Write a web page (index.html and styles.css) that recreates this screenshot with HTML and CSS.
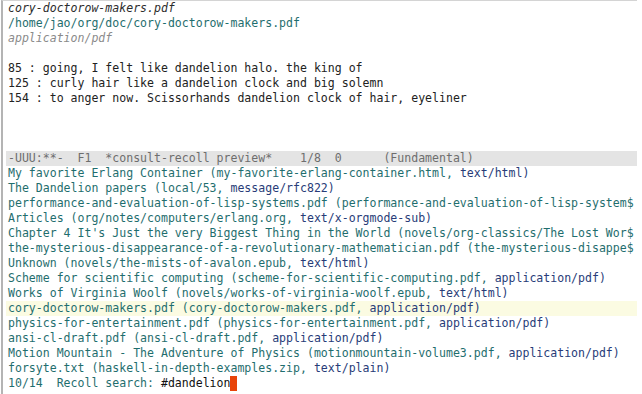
FILE: index.html
```html
<!DOCTYPE html>
<html lang="en">

<head>
  <meta charset="UTF-8">
  <title>consult-recoll</title>
  <link rel="stylesheet" href="styles.css">
</head>

<body>
  <div class="frame">
    <!-- Preview window -->
    <div class="preview">
      <div class="line title">cory-doctorow-makers.pdf</div>
      <div class="line path">/home/jao/org/doc/cory-doctorow-makers.pdf</div>
      <div class="line mime">application/pdf</div>
      <div class="line"> </div>
      <div class="line">85 : going, I felt like dandelion halo. the king of</div>
      <div class="line">125 : curly hair like a dandelion clock and big solemn</div>
      <div class="line">154 : to anger now. Scissorhands dandelion clock of hair, eyeliner</div>
      <div class="line"> </div>
      <div class="line"> </div>
      <div class="line"> </div>
    </div>

    <!-- Mode line -->
    <div class="modeline">-UUU:**-  F1  *consult-recoll preview*    1/8  0      (Fundamental)</div>

    <!-- Minibuffer candidates -->
    <div class="minibuffer">
      <div class="line cand">My favorite Erlang Container (my-favorite-erlang-container.html, <span class="type">text/html)</span></div>
      <div class="line cand">The Dandelion papers (local/53, <span class="type">message/rfc822)</span></div>
      <div class="line cand">performance-and-evaluation-of-lisp-systems.pdf (performance-and-evaluation-of-lisp-system$</div>
      <div class="line cand">Articles (org/notes/computers/erlang.org, <span class="type">text/x-orgmode-sub)</span></div>
      <div class="line cand">Chapter 4 It's Just the very Biggest Thing in the World (novels/org-classics/The Lost Wor$</div>
      <div class="line cand">the-mysterious-disappearance-of-a-revolutionary-mathematician.pdf (the-mysterious-disappe$</div>
      <div class="line cand">Unknown (novels/the-mists-of-avalon.epub, <span class="type">text/html)</span></div>
      <div class="line cand">Scheme for scientific computing (scheme-for-scientific-computing.pdf, <span class="type">application/pdf)</span></div>
      <div class="line cand">Works of Virginia Woolf (novels/works-of-virginia-woolf.epub, <span class="type">text/html)</span></div>
      <div class="line cand current">cory-doctorow-makers.pdf (cory-doctorow-makers.pdf, <span class="type">application/pdf)</span></div>
      <div class="line cand">physics-for-entertainment.pdf (physics-for-entertainment.pdf, <span class="type">application/pdf)</span></div>
      <div class="line cand">ansi-cl-draft.pdf (ansi-cl-draft.pdf, <span class="type">application/pdf)</span></div>
      <div class="line cand">Motion Mountain - The Adventure of Physics (motionmountain-volume3.pdf, <span class="type">application/pdf)</span></div>
      <div class="line cand">forsyte.txt (haskell-in-depth-examples.zip, <span class="type">text/plain)</span></div>
      <div class="line prompt">10/14  Recoll search: <span class="input">#dandelion</span><span class="cursor"></span></div>
    </div>
  </div>
</body>

</html>
```

FILE: styles.css
```css
html,
body {
  margin: 0;
  padding: 0;
  background-color: #fff;
}

body {
  font-family: "DejaVu Sans Mono", monospace;
  font-size: 11.55px;
  color: #222;
  padding-left: 1px;
}

.frame {
  width: 631px;
  height: 393px;
  border-top: 1px solid #d4d4d4;
  border-left: 2px solid #b4b4b4;
  padding-left: 3px;
}

.line {
  height: 15px;
  line-height: 15px;
  padding-left: 2px;
  white-space: pre;
  overflow: hidden;
}

/* Preview buffer */
.title {
  font-style: italic;
  color: #2b2b2b;
}

.path {
  color: #1f6e6e;
}

.mime {
  font-style: italic;
  color: #8a8a8a;
}

/* Mode line */
.modeline {
  height: 15px;
  line-height: 15px;
  padding-left: 2px;
  white-space: pre;
  background-color: #e4e4e4;
  color: #6e6e6e;
}

/* Candidates */
.cand {
  color: #1f6e6e;
}

.cand .type {
  color: #283c78;
}

.current {
  background-color: #fbfbe2;
}

.prompt {
  color: #1f6e6e;
}

.prompt .input {
  color: #111;
}

.cursor {
  display: inline-block;
  width: 7px;
  height: 15px;
  vertical-align: top;
  background-color: #e8440a;
}
```
